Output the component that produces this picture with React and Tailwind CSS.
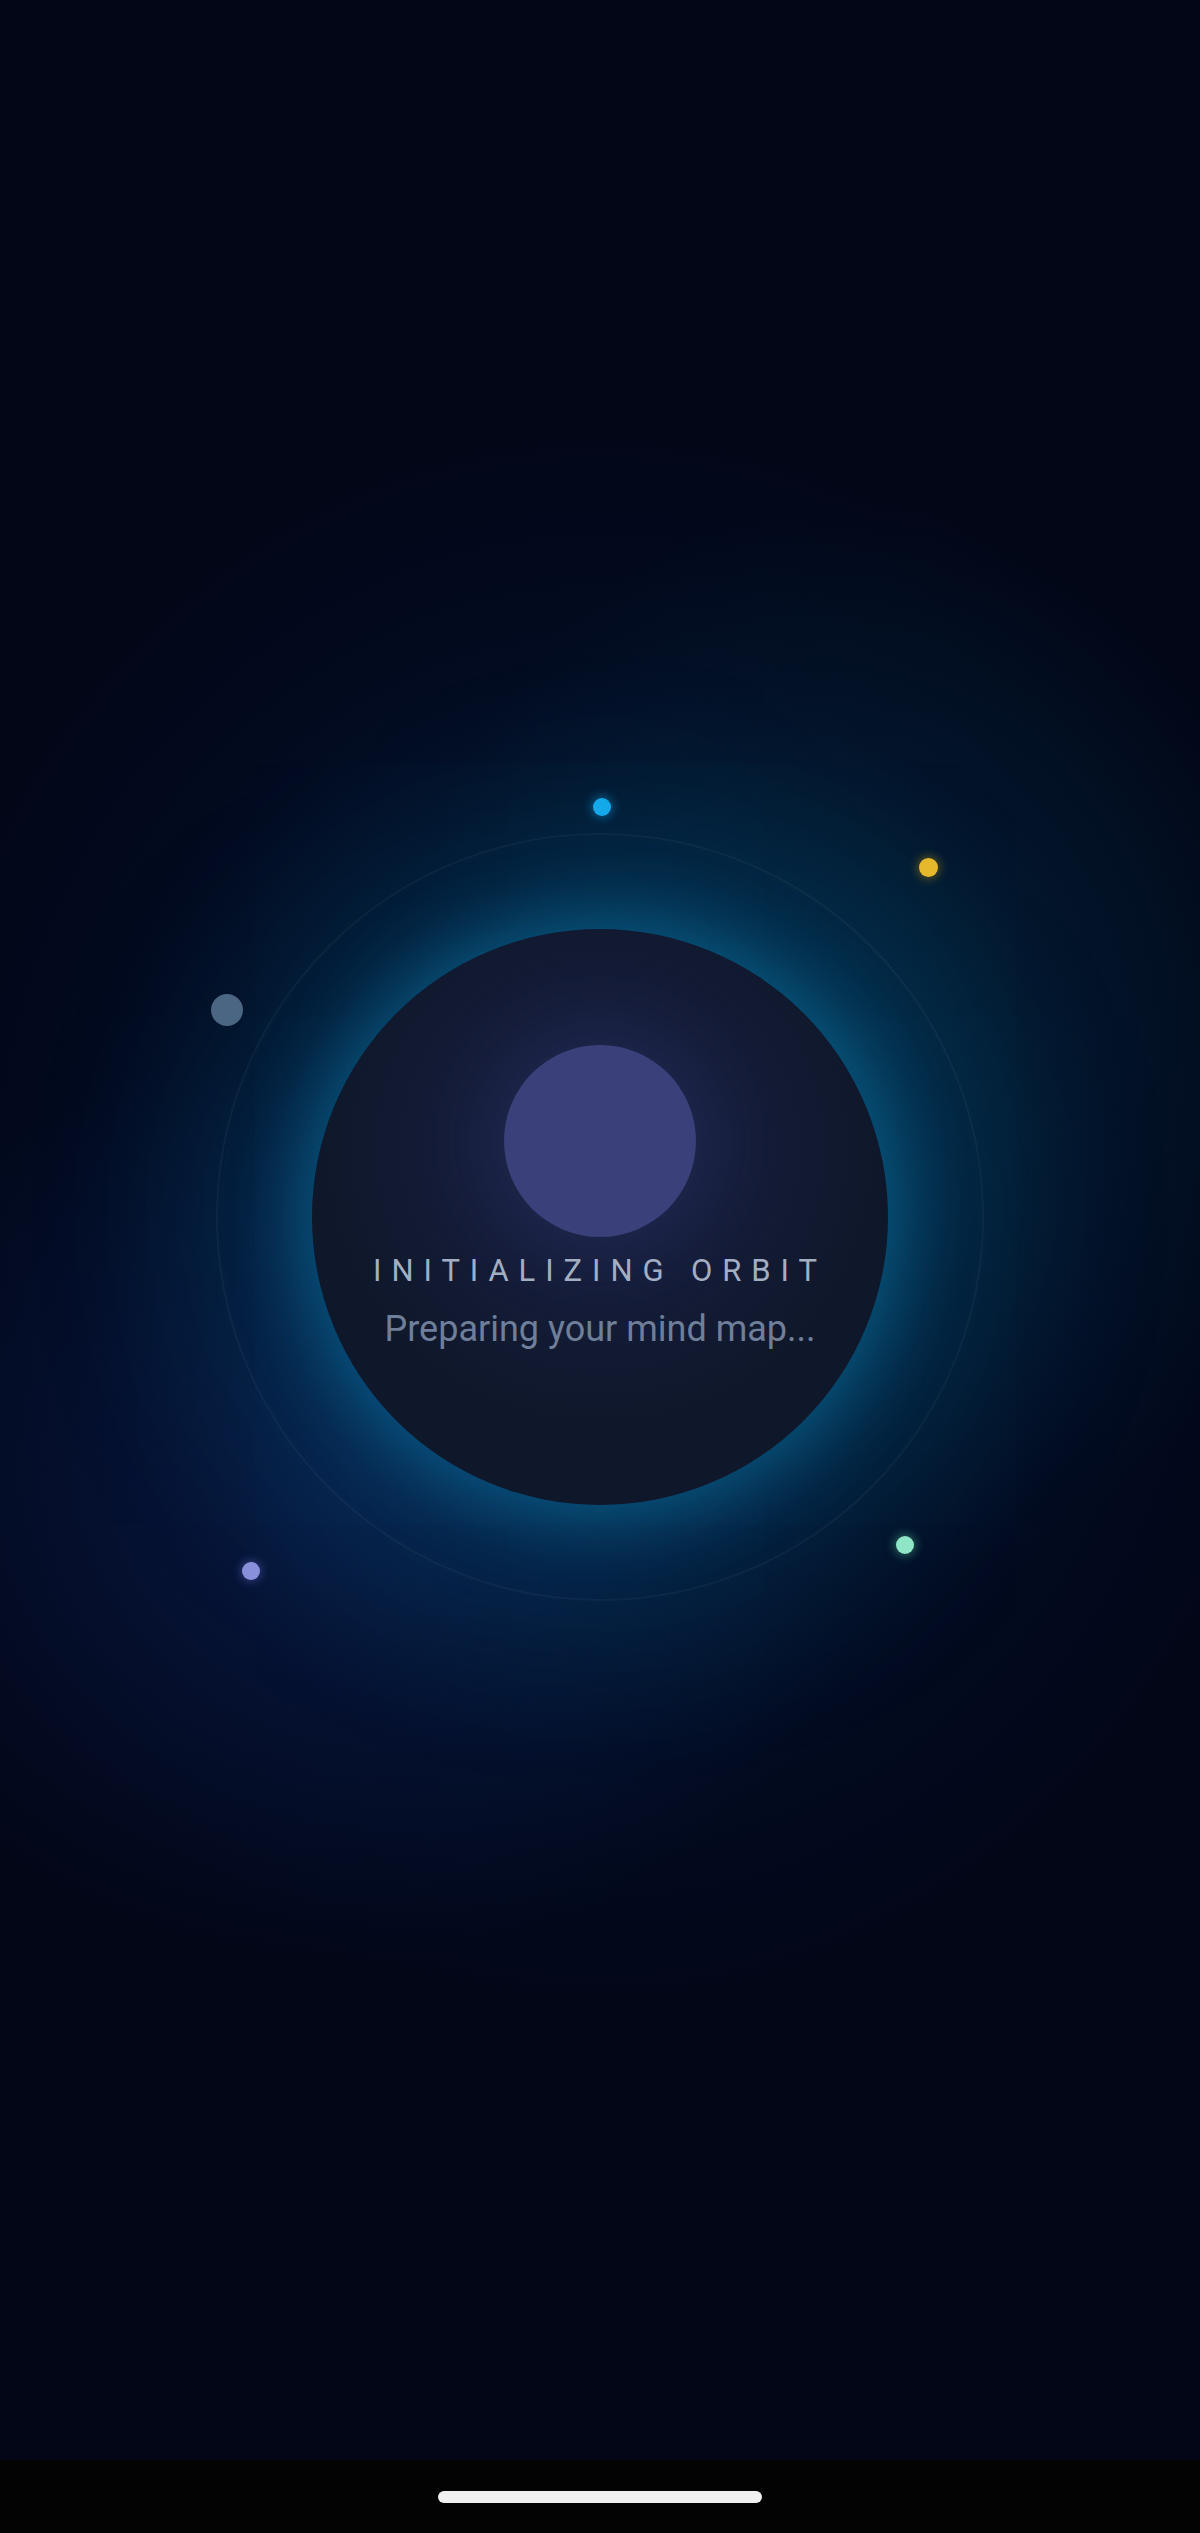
import React from "react";

function Dot({ className }) {
  return <span className={"absolute rounded-full " + className} />;
}

export default function App() {
  return (
    <div className="w-[1200px] h-[2533px] flex flex-col bg-[#020617] font-['Roboto',sans-serif]">
      <main className="relative flex-1 flex items-center justify-center pb-[26px] bg-[#020617] bg-[radial-gradient(820px_920px_at_600px_1217px,rgba(8,92,132,0.5)_0%,rgba(6,62,104,0.36)_35%,rgba(4,32,72,0.18)_62%,transparent_88%),radial-gradient(620px_720px_at_860px_1040px,rgba(4,84,104,0.3)_0%,transparent_75%),radial-gradient(720px_620px_at_340px_1500px,rgba(18,46,124,0.35)_0%,transparent_75%)]">
        <div className="relative w-[768px] h-[768px] rounded-full border-2 border-[#ffffff0b] flex items-center justify-center">
          <div className="w-[576px] h-[576px] rounded-full bg-[#0f172a] bg-[radial-gradient(circle_at_50%_38%,#1c2346_0%,#151d3a_30%,#0f172a_62%)] shadow-[0_0_70px_12px_rgba(14,140,190,0.45),0_0_200px_80px_rgba(8,100,150,0.25)] flex flex-col items-center pt-[116px]">
            <div className="w-[192px] h-[192px] rounded-full bg-[#3a4079] shadow-[0_0_70px_25px_rgba(60,64,140,0.18)]" />
            <p className="mt-[18px] text-[31px] leading-[31px] tracking-[0.32em] text-[#a3aec2] uppercase">
              Initializing Orbit
            </p>
            <p className="mt-[25px] text-[36px] leading-[36px] text-[#6f7f99]">
              Preparing your mind map...
            </p>
          </div>
          <Dot className="left-[375px] top-[-37px] w-[18px] h-[18px] bg-[#12a8ea] shadow-[0_0_10px_2px_rgba(14,165,233,0.45)]" />
          <Dot className="left-[701px] top-[23px] w-[19px] h-[19px] bg-[#e6b82c] shadow-[0_0_10px_2px_rgba(234,179,8,0.35)]" />
          <Dot className="left-[-7px] top-[159px] w-[32px] h-[32px] bg-[#4b6682]" />
          <Dot className="left-[24px] top-[727px] w-[18px] h-[18px] bg-[#8890dc] shadow-[0_0_8px_2px_rgba(129,140,248,0.3)]" />
          <Dot className="left-[678px] top-[701px] w-[18px] h-[18px] bg-[#8fe6c6] shadow-[0_0_10px_2px_rgba(110,231,183,0.35)]" />
        </div>
      </main>
      <div className="h-[73px] shrink-0 bg-[#030303] flex items-center justify-center">
        <div className="w-[324px] h-[12px] rounded-full bg-[#f0f0f0]" />
      </div>
    </div>
  );
}
